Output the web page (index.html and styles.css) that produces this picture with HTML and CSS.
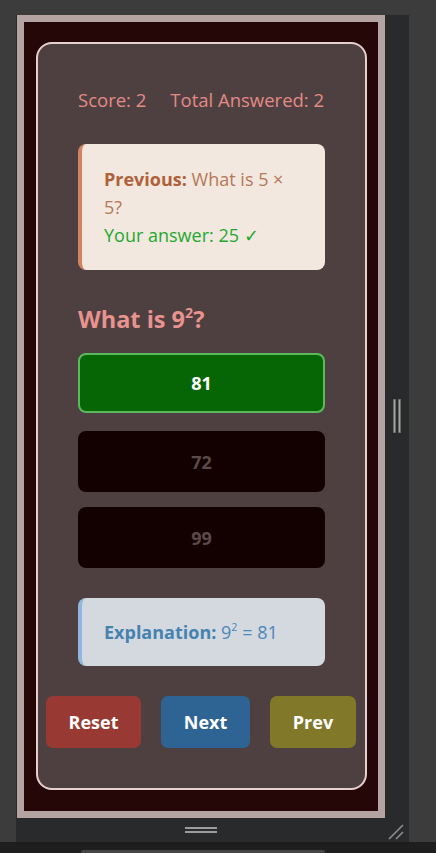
FILE: index.html
```html
<!DOCTYPE html>
<html>
<head>
<meta charset="utf-8">
<link rel="stylesheet" href="styles.css">
</head>
<body>
<div class="window">
  <div class="frame">
    <div class="card">
      <div class="score-row">
        <span>Score: 2</span>
        <span>Total Answered: 2</span>
      </div>
      <div class="note note-prev">
        <div><strong>Previous:</strong> What is 5 × 5?</div>
        <div class="answer">Your answer: 25 ✓</div>
      </div>
      <h2 class="question">What is 9<sup>2</sup>?</h2>
      <div class="options">
        <button class="option option-correct">81</button>
        <button class="option option-dim">72</button>
        <button class="option option-dim option-last">99</button>
      </div>
      <div class="note note-explain">
        <strong>Explanation:</strong> 9<sup>2</sup> = 81
      </div>
      <div class="actions">
        <button class="btn btn-reset">Reset</button>
        <button class="btn btn-next">Next</button>
        <button class="btn btn-prev">Prev</button>
      </div>
    </div>
  </div>
  <div class="side-strip">
    <div class="vhandle"><span></span><span></span></div>
  </div>
  <div class="bottom-strip">
    <div class="hhandle"><span></span><span></span></div>
    <svg class="resize" width="16" height="16" viewBox="0 0 16 16">
      <line x1="1" y1="15" x2="15" y2="1" stroke="#8f8f8f" stroke-width="1.6"/>
      <line x1="8" y1="15" x2="15" y2="8" stroke="#8f8f8f" stroke-width="1.6"/>
    </svg>
  </div>
</div>
<div class="footer-bar"><div class="footer-line"></div></div>
</body>
</html>
```

FILE: styles.css
```css
*, *::before, *::after {
  box-sizing: border-box;
}

html, body {
  margin: 0;
  padding: 0;
  height: 853px;
  overflow: hidden;
  background: #3c3c3c;
  font-family: "Open Sans", "Noto Sans", sans-serif;
}

.window {
  margin: 15px 0 0 16px;
  width: 393px;
  height: 827px;
  display: grid;
  grid-template-columns: 369px 24px;
  grid-template-rows: 803px 24px;
  background: #292a2c;
}

.frame {
  margin-left: 1px;
  border: 7px solid #b5a3a2;
  background: #250707;
  padding: 20px 11px 21px 12px;
  display: flex;
  min-width: 0;
}

.card {
  flex: 1;
  min-width: 0;
  border: 2px solid #e6d0cf;
  border-radius: 16px;
  background: #4e4040;
  padding: 44px 40px 0 40px;
}

.score-row {
  display: flex;
  gap: 24px;
  color: #e48a86;
  font-size: 18.5px;
  line-height: 24px;
  white-space: nowrap;
}

.note {
  border-radius: 8px;
  padding: 21px 24px 21px 22px;
  font-size: 18px;
  line-height: 28px;
}

.note-prev {
  margin-top: 32px;
  background: #f2e8df;
  border-left: 4px solid #d08461;
  color: #b57858;
}

.note-prev strong {
  color: #b0603a;
}

.answer {
  color: #1fa82f;
}

.note-explain {
  margin-top: 30px;
  padding-top: 20px;
  padding-bottom: 20px;
  background: #d3d9df;
  border-left: 4px solid #8fb8dc;
  color: #4a88b8;
}

.note-explain strong {
  color: #4682b0;
}

sup {
  font-size: 0.6em;
  line-height: 0;
  vertical-align: 0.7em;
}

.question {
  margin: 33px 0 0 0;
  color: #e89390;
  font-size: 23.5px;
  line-height: 32px;
  font-weight: 700;
}

.options {
  margin-top: 18px;
  display: flex;
  flex-direction: column;
}

.option {
  font-family: inherit;
  font-size: 18px;
  font-weight: 700;
  height: 61px;
  border-radius: 8px;
  border: none;
  margin-bottom: 15px;
}

.option-correct {
  height: 60px;
  background: #066606;
  border: 2px solid #5cb85c;
  color: #ffffff;
  margin-bottom: 18px;
}

.option-dim {
  background: #130000;
  color: #5c4a4a;
}

.option-last {
  margin-bottom: 0;
}

.actions {
  margin: 30px -32px 0 -32px;
  display: flex;
  gap: 20px;
}

.btn {
  font-family: inherit;
  height: 52px;
  padding: 0;
  border: none;
  border-radius: 7px;
  font-size: 18px;
  font-weight: 700;
  color: #ffffff;
}

.btn-reset { background: #983a33; width: 95px; }
.btn-next { background: #2d6494; width: 89px; }
.btn-prev { background: #827829; width: 86px; }

.side-strip {
  background: #292a2c;
  position: relative;
}

.vhandle {
  position: absolute;
  left: 8px;
  top: 384px;
  display: flex;
  gap: 2px;
}

.vhandle span {
  width: 3px;
  height: 34px;
  background: #a3a3a3;
  border: 0.5px solid #6a6a6a;
}

.bottom-strip {
  grid-column: 1 / 3;
  position: relative;
  background: #292a2c;
}

.hhandle {
  position: absolute;
  left: 169px;
  top: 9px;
  display: flex;
  flex-direction: column;
  gap: 2px;
}

.hhandle span {
  width: 32px;
  height: 2px;
  background: #9c9c9c;
}

.resize {
  position: absolute;
  left: 372px;
  top: 6px;
}

.footer-bar {
  height: 11px;
  background: #1e1e1e;
  position: relative;
}

.footer-line {
  position: absolute;
  left: 81px;
  width: 244px;
  top: 8px;
  height: 3px;
  background: #464646;
  border-radius: 2px 2px 0 0;
}
```
